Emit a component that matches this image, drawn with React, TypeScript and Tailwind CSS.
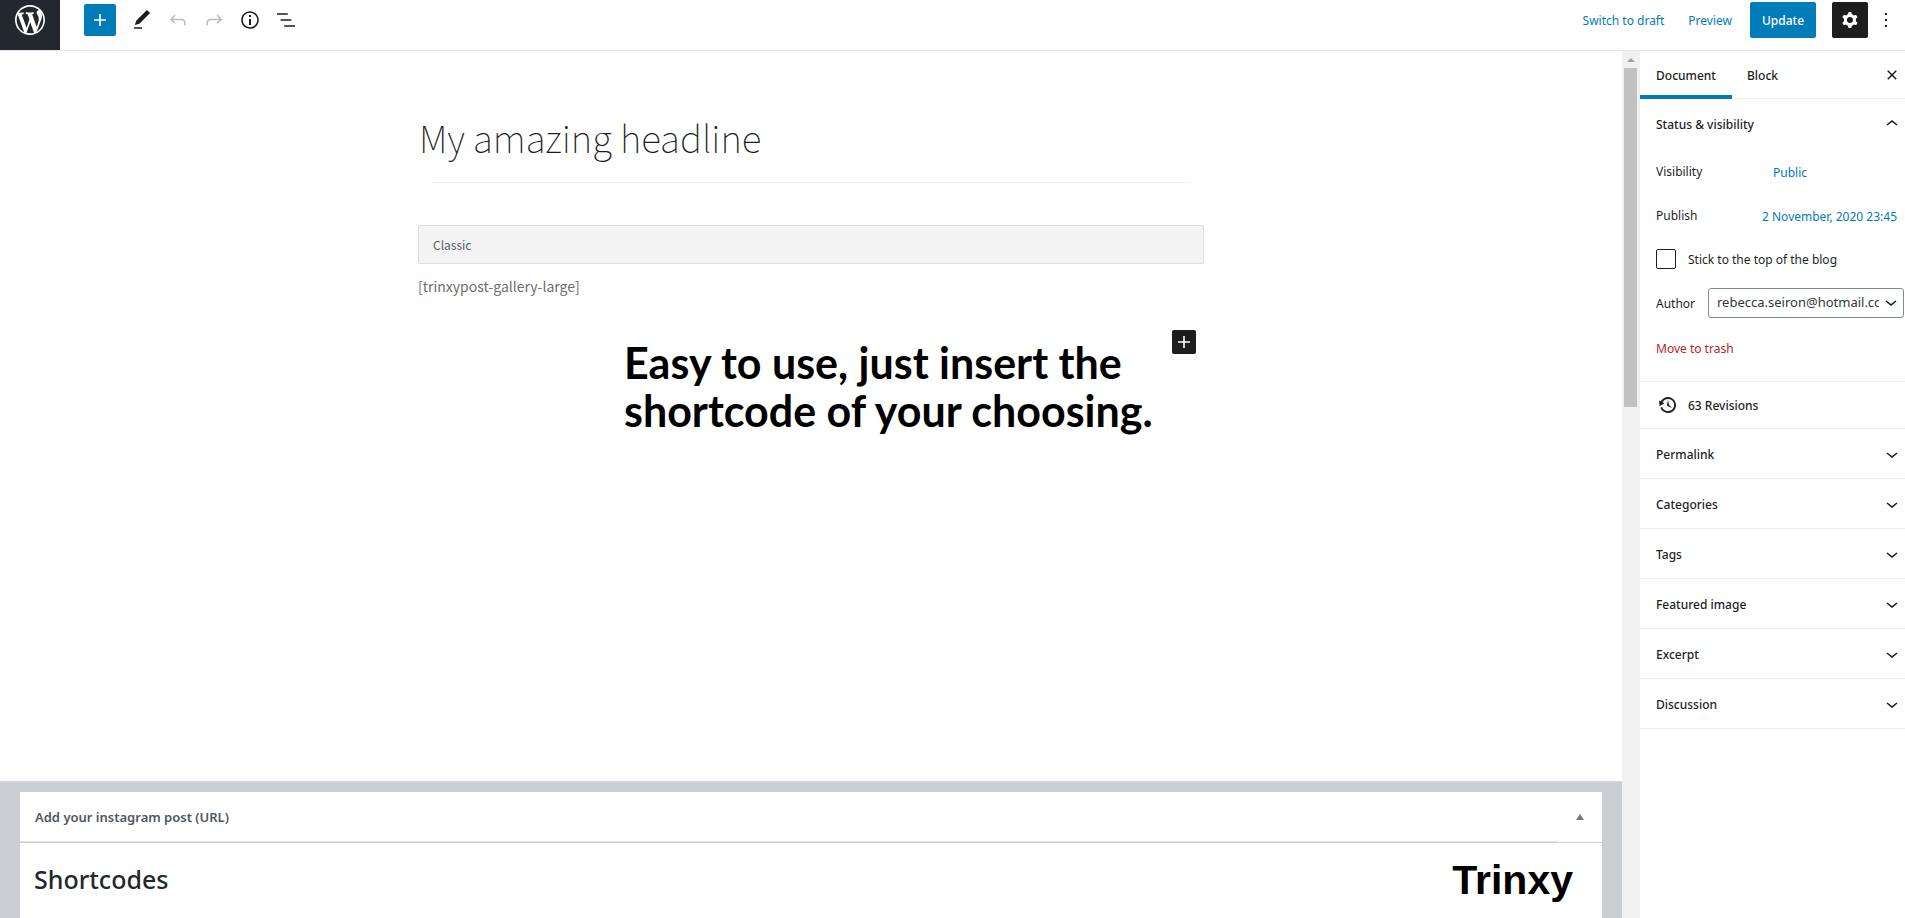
import { useState, type ReactNode } from "react";

const icons = {
  wordpress:
    "M20 10c0-5.51-4.49-10-10-10C4.48 0 0 4.49 0 10c0 5.52 4.48 10 10 10 5.51 0 10-4.48 10-10zM7.78 15.37L4.37 6.22c.55-.02 1.17-.08 1.17-.08.5-.06.44-1.13-.06-1.11 0 0-1.45.11-2.37.11-.18 0-.37 0-.58-.01C4.12 2.69 6.87 1.11 10 1.11c2.33 0 4.45.87 6.05 2.34-.68-.11-1.65.39-1.65 1.58 0 .74.45 1.36.9 2.1.35.61.55 1.36.55 2.46 0 1.49-1.4 5-1.4 5l-3.03-8.37c.54-.02.82-.17.82-.17.5-.05.44-1.25-.06-1.22 0 0-1.44.12-2.38.12-.87 0-2.33-.12-2.33-.12-.5-.03-.56 1.2-.06 1.22l.92.08 1.26 3.41zM17.41 10c.24-.64.74-1.87.43-4.25.7 1.29 1.05 2.71 1.05 4.25 0 3.29-1.73 6.24-4.4 7.78.97-2.59 1.94-5.2 2.92-7.78zM6.1 18.09C3.12 16.65 1.11 13.53 1.11 10c0-1.3.23-2.48.72-3.59C3.25 10.3 4.67 14.2 6.1 18.09zm4.03-6.63l2.58 6.98c-.86.29-1.76.45-2.71.45-.79 0-1.57-.11-2.29-.33.81-2.38 1.62-4.74 2.42-7.1z",
  plus: "M18 11.2h-5.2V6h-1.6v5.2H6v1.6h5.2V18h1.6v-5.2H18z",
  edit: "M20.1 5.1L16.9 2 6.2 12.7l-1.3 4.4 4.5-1.3L20.1 5.1zM4 20.8h8v-1.5H4v1.5z",
  undo: "M18.3 11.7c-.6-.6-1.4-.9-2.3-.9H6.7l2.9-3.3-1.1-1-4.5 5L8.5 16l1-1-2.7-2.7H16c.5 0 .9.2 1.3.5 1 1 1 3.4 1 4.5v.3h1.5v-.2c0-1.5 0-4.3-1.5-5.7z",
  redo: "M15.6 6.5l-1.1 1 2.9 3.3H8c-.9 0-1.7.3-2.3.9-1.4 1.5-1.4 4.2-1.4 5.6v.2h1.5v-.3c0-1.1 0-3.5 1-4.5.3-.3.7-.5 1.3-.5h9.2L14.5 15l1.1 1.1 4.6-4.6-4.6-5z",
  info: "M12 3.2c-4.8 0-8.8 3.9-8.8 8.8 0 4.8 3.9 8.8 8.8 8.8 4.8 0 8.8-3.9 8.8-8.8 0-4.8-4-8.8-8.8-8.8zm0 16c-4 0-7.2-3.3-7.2-7.2C4.8 8 8 4.8 12 4.8s7.2 3.3 7.2 7.2c0 4-3.2 7.2-7.2 7.2zM11 17h2v-6h-2v6zm0-8h2V7h-2v2z",
  outline: "M13.8 5.2H3v1.5h10.8V5.2zm-3.6 12v1.5H21v-1.5H10.2zm7.2-6H6.6v1.5h10.8v-1.5z",
  cog: "M10.289 4.836A1 1 0 0111.275 4h1.306a1 1 0 01.987.836l.244 1.466c.787.26 1.503.679 2.108 1.218l1.393-.522a1 1 0 011.216.437l.653 1.13a1 1 0 01-.23 1.273l-1.148.944a6.025 6.025 0 010 2.435l1.149.946a1 1 0 01.23 1.272l-.653 1.13a1 1 0 01-1.216.437l-1.394-.522c-.605.54-1.32.958-2.108 1.218l-.244 1.466a1 1 0 01-.987.836h-1.306a1 1 0 01-.986-.836l-.244-1.466a5.995 5.995 0 01-2.108-1.218l-1.394.522a1 1 0 01-1.217-.436l-.653-1.131a1 1 0 01.23-1.272l1.149-.946a6.026 6.026 0 010-2.435l-1.148-.944a1 1 0 01-.23-1.272l.653-1.131a1 1 0 011.217-.437l1.393.522a5.994 5.994 0 012.108-1.218l.244-1.466zM14.929 12a3 3 0 11-6 0 3 3 0 016 0z",
  more: "M13 19h-2v-2h2v2zm0-6h-2v-2h2v2zm0-6h-2V5h2v2z",
  down: "M17.5 11.6L12 16l-5.5-4.4.9-1.2L12 14l4.5-3.6 1 1.2z",
  up: "M6.5 12.4L12 8l5.5 4.4-.9 1.2L12 10l-4.5 3.6-1-1.2z",
  close:
    "M12 13.06l3.712 3.713 1.061-1.06L13.061 12l3.712-3.712-1.06-1.06L12 10.938 8.288 7.227l-1.061 1.06L10.939 12l-3.712 3.712 1.06 1.061L12 13.061z",
  backup:
    "M13.65 2.88c3.93 2.01 5.48 6.84 3.47 10.77s-6.83 5.48-10.77 3.47c-1.87-.96-3.2-2.56-3.86-4.4l1.64-1.03c.45 1.57 1.52 2.95 3.08 3.76 3.01 1.54 6.69.35 8.23-2.66 1.55-3.01.36-6.69-2.65-8.24C9.78 3.01 6.1 4.2 4.56 7.21l1.88.97-4.95 3.08-.39-5.82 1.78.91C4.9 2.4 9.75.89 13.65 2.88zm-4.36 7.83C9.11 10.53 9 10.28 9 10c0-.07.03-.12.04-.19h-.01L10 5l.97 4.81L14 13l-4.5-2.12.02-.02c-.08-.04-.16-.09-.23-.15z",
};

type IconProps = { name: keyof typeof icons; box?: number; className?: string };

function Icon({ name, box = 24, className = "size-6" }: IconProps) {
  return (
    <svg viewBox={`0 0 ${box} ${box}`} className={`shrink-0 ${className}`} fill="currentColor" fillRule={name === "cog" ? "evenodd" : "nonzero"} aria-hidden="true">
      <path d={icons[name]} />
    </svg>
  );
}

function ToolButton({ name, label, disabled }: { name: keyof typeof icons; label: string; disabled?: boolean }) {
  return (
    <button type="button" aria-label={label} disabled={disabled} className="flex size-9 items-center justify-center disabled:text-[#bcbcbc]">
      <Icon name={name} />
    </button>
  );
}

function Header() {
  return (
    <header className="flex h-[51px] shrink-0 border-b border-[#e8e8e8]">
      <a href="#dashboard" aria-label="View posts" className="flex w-15 justify-center bg-[#23282e] pt-[5px] text-white">
        <Icon name="wordpress" box={20} className="size-[30px]" />
      </a>
      <div className="flex h-10 flex-1 items-center pl-6">
        <button type="button" aria-label="Add block" className="mr-2 flex size-8 items-center justify-center rounded-xs bg-[#007cba] text-white">
          <Icon name="plus" />
        </button>
        <ToolButton name="edit" label="Edit" />
        <ToolButton name="undo" label="Undo" disabled />
        <ToolButton name="redo" label="Redo" disabled />
        <ToolButton name="info" label="Details" />
        <ToolButton name="outline" label="Block navigation" />
      </div>
      <div className="flex h-10 items-center pr-[7px]">
        <button type="button" className="mr-6 pt-0.5 text-[#007cba]">Switch to draft</button>
        <button type="button" className="mr-[18px] pt-0.5 text-[#007cba]">Preview</button>
        <button type="button" className="mr-4 h-9 w-[66px] rounded-xs bg-[#007cba] pt-0.5 font-medium text-white">Update</button>
        <button type="button" aria-label="Settings" className="mr-[6px] flex size-9 items-center justify-center rounded-xs bg-[#1e1e1e] text-white">
          <Icon name="cog" />
        </button>
        <button type="button" aria-label="Options"><Icon name="more" /></button>
      </div>
    </header>
  );
}

function Editor() {
  return (
    <div className="flex min-w-0 flex-1 flex-col">
      <main className="flex-1 px-4">
        <div className="mx-auto max-w-[786px] pt-[52px] font-['Noto_Sans_CJK_SC',sans-serif]">
          <h1 className="px-px text-[37px] leading-[68px] font-thin text-[#191e23]">My amazing headline</h1>
          <hr className="mx-[14px] mt-[11px] border-[#f0f0f0]" />
          <div className="mt-[42px] flex h-[39px] items-center rounded-xs border border-[#dedede] bg-[#f4f4f4] px-[14px] text-[12px] text-[#555d66]">Classic</div>
          <p className="mt-[10px] text-[14px] leading-6 text-[#6d6d6d]">[trinxypost-gallery-large]</p>
          <div className="mt-8 flex items-start justify-between pr-2 pl-[206px]">
            <p className="mt-[9px] font-['Lato',sans-serif] text-[43px] leading-12 font-bold whitespace-nowrap text-black">
              Easy to use, just insert the
              <br />
              shortcode of your choosing.
            </p>
            <button type="button" aria-label="Add block" className="flex h-6 w-6 items-center justify-center rounded-xs bg-[#1e1e1e] text-white">
              <Icon name="plus" />
            </button>
          </div>
        </div>
      </main>
      <section className="border-t border-[#d5d8dc] bg-[#cbced3] px-5 pt-[10px]">
        <div className="h-[126px] overflow-hidden bg-white">
          <div className="flex items-stretch border-b border-[#ccd0d4]">
            <h2 className="flex h-[50px] flex-1 items-center border-b border-[#e2e4e7] px-[15px] pt-0.5 text-[13px] font-semibold text-[#50575e]">Add your instagram post (URL)</h2>
            <button type="button" aria-label="Toggle panel" className="flex w-11 items-center justify-center text-[#72777c]">
              <svg viewBox="0 0 8 6" className="h-[6px] w-2" fill="currentColor" aria-hidden="true"><path d="M4 0L8 6H0z" /></svg>
            </button>
          </div>
          <div className="flex justify-between pr-[29px] pl-[14px]">
            <h3 className="pt-4 text-[25px] leading-10 font-medium text-[#23282d]">Shortcodes</h3>
            <span className="pt-[13px] font-['Liberation_Sans',sans-serif] text-[41px] leading-12 font-bold text-black">Trinxy</span>
          </div>
        </div>
      </section>
    </div>
  );
}

function ScrollTrack() {
  return (
    <div aria-hidden="true" className="flex w-[18px] shrink-0 flex-col items-center bg-[#f0f0f0] pr-[3px] pl-[2px]">
      <svg viewBox="0 0 8 4" className="mt-[7px] mb-[6px] h-1 w-2" fill="#a0a0a0"><path d="M4 0L8 4H0z" /></svg>
      <div className="h-[339px] w-full bg-[#c1c1c1]" />
    </div>
  );
}

function Row({ children }: { children: ReactNode }) {
  return <div className="flex h-11 items-center">{children}</div>;
}

function Sidebar() {
  const [sticky, setSticky] = useState(false);
  return (
    <aside className="w-[265px] shrink-0">
      <div role="tablist" className="flex h-12 border-b border-[#ececec] font-medium">
        <button type="button" role="tab" aria-selected="true" className="-mb-px w-[92px] border-b-4 border-[#007cba] pt-1.5">Document</button>
        <button type="button" role="tab" aria-selected="false" className="w-[61px] pt-0.5">Block</button>
        <button type="button" aria-label="Close settings" className="mr-px ml-auto"><Icon name="close" /></button>
      </div>
      <div className="border-b border-[#ececec] pb-3 pl-4">
        <button type="button" className="flex h-[50px] w-full items-center justify-between pr-px font-medium">
          <span className="pt-0.5">Status &amp; visibility</span>
          <Icon name="up" />
        </button>
        <Row>
          <span className="w-[117px] pt-0.5">Visibility</span>
          <button type="button" className="pt-1 text-[#007cba]">Public</button>
        </Row>
        <Row>
          <span className="flex-1 pt-0.5">Publish</span>
          <button type="button" className="pt-1 pr-2 text-[#007cba]">2 November, 2020 23:45</button>
        </Row>
        <Row>
          <input id="sticky" type="checkbox" checked={sticky} onChange={(e) => setSticky(e.target.checked)} className="mr-3 size-5 appearance-none rounded-xs border border-[#1e1e1e] checked:bg-[#007cba]" />
          <label htmlFor="sticky" className="pt-0.5">Stick to the top of the blog</label>
        </Row>
        <Row>
          <label htmlFor="author" className="w-[52px] pt-0.5">Author</label>
          <span className="relative mr-px flex-1">
            <select id="author" className="block h-[30px] w-full appearance-none overflow-hidden rounded-[3px] border border-[#7e8993] bg-white pr-6 pl-2 text-[13px] text-[#32373c]">
              <option>rebecca.seiron@hotmail.com</option>
            </select>
            <Icon name="down" className="pointer-events-none absolute top-[2px] right-px size-6" />
          </span>
        </Row>
        <Row>
          <button type="button" className="pt-1 text-[#b52727]">Move to trash</button>
        </Row>
      </div>
      <a href="#revisions" className="flex h-[47px] items-center gap-[10px] border-b border-[#ececec] pl-[18px] font-medium">
        <Icon name="backup" box={20} className="size-5" />
        <span className="pt-0.5">63 Revisions</span>
      </a>
      {["Permalink", "Categories", "Tags", "Featured image", "Excerpt", "Discussion"].map((title) => (
        <button key={title} type="button" className="flex h-[50px] w-full items-center justify-between border-b border-[#ececec] pr-px pl-4 font-medium">
          <span className="pt-0.5">{title}</span>
          <Icon name="down" />
        </button>
      ))}
    </aside>
  );
}

export default function App() {
  return (
    <div className="flex min-h-screen flex-col bg-white font-['Noto_Sans',sans-serif] text-[12px] text-[#1e1e1e]">
      <Header />
      <div className="flex flex-1">
        <Editor />
        <ScrollTrack />
        <Sidebar />
      </div>
    </div>
  );
}
